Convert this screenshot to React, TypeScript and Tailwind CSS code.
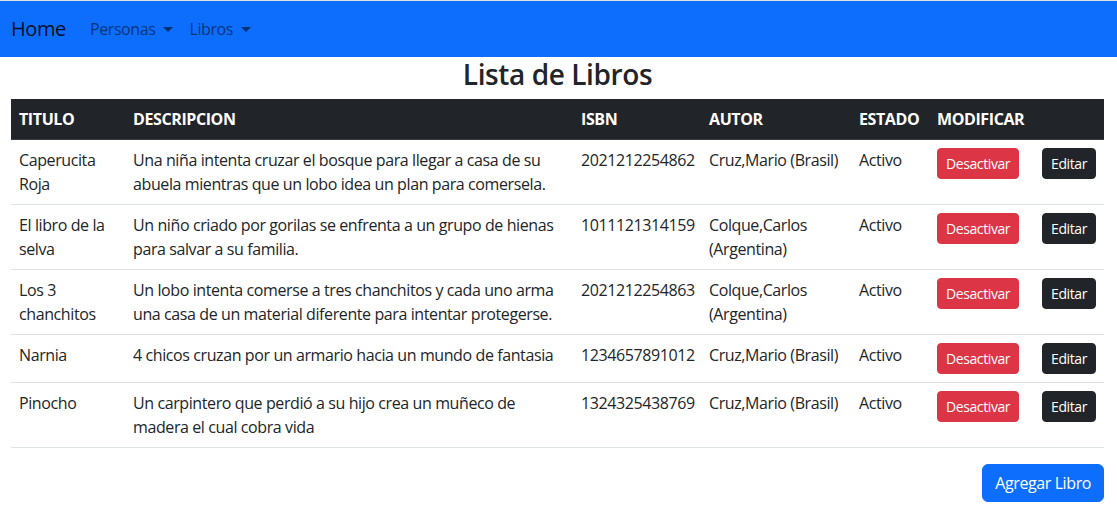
import React from 'react';

interface Libro {
  titulo: string;
  descripcion: string;
  isbn: string;
  autor: string;
  estado: string;
}

const libros: Libro[] = [
  {
    titulo: 'Caperucita Roja',
    descripcion: 'Una niña intenta cruzar el bosque para llegar a casa de su abuela mientras que un lobo idea un plan para comersela.',
    isbn: '2021212254862',
    autor: 'Cruz,Mario (Brasil)',
    estado: 'Activo',
  },
  {
    titulo: 'El libro de la selva',
    descripcion: 'Un niño criado por gorilas se enfrenta a un grupo de hienas para salvar a su familia.',
    isbn: '1011121314159',
    autor: 'Colque,Carlos (Argentina)',
    estado: 'Activo',
  },
  {
    titulo: 'Los 3 chanchitos',
    descripcion: 'Un lobo intenta comerse a tres chanchitos y cada uno arma una casa de un material diferente para intentar protegerse.',
    isbn: '2021212254863',
    autor: 'Colque,Carlos (Argentina)',
    estado: 'Activo',
  },
  {
    titulo: 'Narnia',
    descripcion: '4 chicos cruzan por un armario hacia un mundo de fantasia',
    isbn: '1234657891012',
    autor: 'Cruz,Mario (Brasil)',
    estado: 'Activo',
  },
  {
    titulo: 'Pinocho',
    descripcion: 'Un carpintero que perdió a su hijo crea un muñeco de madera el cual cobra vida',
    isbn: '1324325438769',
    autor: 'Cruz,Mario (Brasil)',
    estado: 'Activo',
  },
];

function Caret() {
  return (
    <span className="ml-[8px] inline-block align-[3px] border-x-[5px] border-t-[5px] border-x-transparent border-t-black/55" />
  );
}

export default function App() {
  return (
    <div className="min-h-[523px] bg-white text-[#212529] font-['Open_Sans',sans-serif] tracking-[-0.025em] border-t border-[#dee2e6]">
      <nav className="flex h-14 items-center bg-[#0d6efd] pl-[11px]">
        <a className="mr-4 text-[20px] leading-[30px] text-black/90">Home</a>
        <a className="px-2 text-base leading-6 text-black/55">
          Personas
          <Caret />
        </a>
        <a className="px-2 text-base leading-6 text-black/55">
          Libros
          <Caret />
        </a>
      </nav>

      <div className="pl-[11px] pr-[13px]">
        <h3 className="mb-[8px] text-center text-[28px] font-semibold leading-[34px]">Lista de Libros</h3>

        <table className="w-full table-fixed border-collapse text-base leading-6">
          <thead>
            <tr className="border-b border-[#373b3e] bg-[#212529] text-left font-bold text-white">
              <th className="w-[114px] px-2 py-2">TITULO</th>
              <th className="w-[448px] px-2 py-2">DESCRIPCION</th>
              <th className="w-[128px] px-2 py-2">ISBN</th>
              <th className="w-[150px] px-2 py-2">AUTOR</th>
              <th className="w-[78px] px-2 py-2">ESTADO</th>
              <th className="w-[105px] px-2 py-2">MODIFICAR</th>
              <th className="px-2 py-2"></th>
            </tr>
          </thead>
          <tbody>
            {libros.map((libro, i) => (
              <tr key={i} className="border-b border-[#dee2e6] align-top">
                <td className="px-2 py-2">{libro.titulo}</td>
                <td className="px-2 py-2">{libro.descripcion}</td>
                <td className="px-2 py-2">{libro.isbn}</td>
                <td className="px-2 py-2">{libro.autor}</td>
                <td className="px-2 py-2">{libro.estado}</td>
                <td className="px-2 py-2">
                  <button className="rounded border border-[#dc3545] bg-[#dc3545] px-2 py-1 text-sm leading-[21px] text-white">Desactivar</button>
                </td>
                <td className="px-2 py-2">
                  <button className="rounded border border-[#212529] bg-[#212529] px-2 py-1 text-sm leading-[21px] text-white">Editar</button>
                </td>
              </tr>
            ))}
          </tbody>
        </table>

        <div className="mt-4 flex justify-end">
          <button className="rounded-md border border-[#0d6efd] bg-[#0d6efd] px-3 py-1.5 text-base leading-6 text-white">Agregar Libro</button>
        </div>
      </div>
    </div>
  );
}
